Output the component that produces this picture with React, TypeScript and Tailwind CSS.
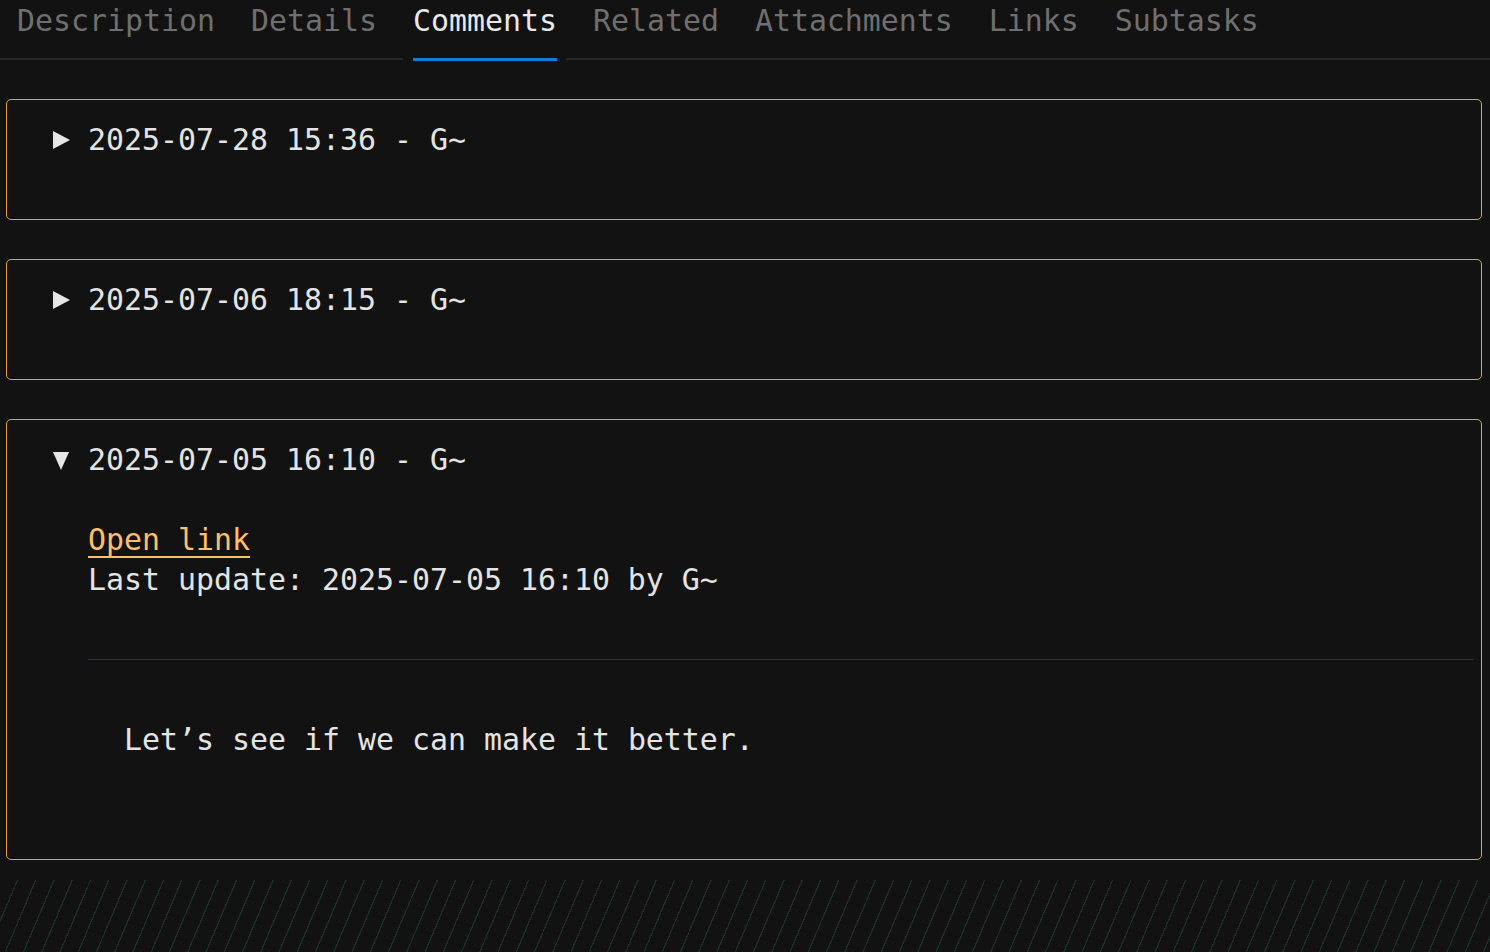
import React from 'react';

const tabs = ['Description', 'Details', 'Comments', 'Related', 'Attachments', 'Links', 'Subtasks'];
const ACTIVE = 'Comments';

function Triangle({ open }: { open: boolean }) {
  return (
    <svg width="18" height="40" viewBox="0 0 18 40" className="shrink-0">
      {open ? (
        <polygon points="1,12 17,12 9,30" fill="#e6e6e6" />
      ) : (
        <polygon points="1,11 18,20 1,29" fill="#e6e6e6" />
      )}
    </svg>
  );
}

function Comment({ stamp, open, children }: { stamp: string; open?: boolean; children?: React.ReactNode }) {
  return (
    <div className={`border border-[#f0a030] rounded-[5px] pl-[45px] pr-[7px] pt-[20px] ${open ? 'pb-[99px]' : 'pb-[59px]'}`}>
      <div className="flex items-center h-[40px] gap-[18px]">
        <Triangle open={!!open} />
        <span>{stamp}</span>
      </div>
      {open && <div className="pl-[36px]">{children}</div>}
    </div>
  );
}

export default function App() {
  return (
    <div
      className="w-[1490px] h-[952px] overflow-hidden bg-[#121212] text-[#e4e4e4] text-[29.9px] leading-[40px]"
      style={{ fontFamily: '"DejaVu Sans Mono", "Liberation Mono", monospace' }}
    >
      {/* Tabs */}
      <div className="flex border-b-2 border-[#262626]">
        {tabs.map((t) => (
          <div key={t} className="px-[18px] pt-[1px] pb-[17px] first:pl-[17px]">
            <div className={`relative ${t === ACTIVE ? 'text-[#e8e8e8]' : 'text-[#6f6f6f]'}`}>
              {t}
              {t === ACTIVE && (
                <div className="absolute left-[-10px] right-[-9px] bottom-[-20px] h-[3px] bg-[#121212] px-[10px]">
                  <div className="h-full bg-[#0b7fdc] mr-[-1px]" />
                </div>
              )}
            </div>
          </div>
        ))}
      </div>

      {/* Comments */}
      <div className="ml-[6px] mr-[8px] mt-[39px] flex flex-col gap-[39px]">
        <Comment stamp="2025-07-28 15:36 - G~" />
        <Comment stamp="2025-07-06 18:15 - G~" />
        <Comment stamp="2025-07-05 16:10 - G~" open>
          <div className="mt-[40px]">
            <a className="text-[#ffbf69] underline decoration-2 underline-offset-[6px] cursor-pointer">Open link</a>
          </div>
          <div>Last update: 2025-07-05 16:10 by G~</div>
          <div className="mt-[59px] h-px bg-[#1c3652]" />
          <p className="mt-[60px] pl-[36px]">Let’s see if we can make it better.</p>
        </Comment>
      </div>

      {/* Hatched footer */}
      <div className="mt-[20px] h-[120px] bg-[repeating-linear-gradient(113deg,transparent_0px,transparent_15.5px,#1a3025_15.5px,#1a3025_16.8px)]" />
    </div>
  );
}
